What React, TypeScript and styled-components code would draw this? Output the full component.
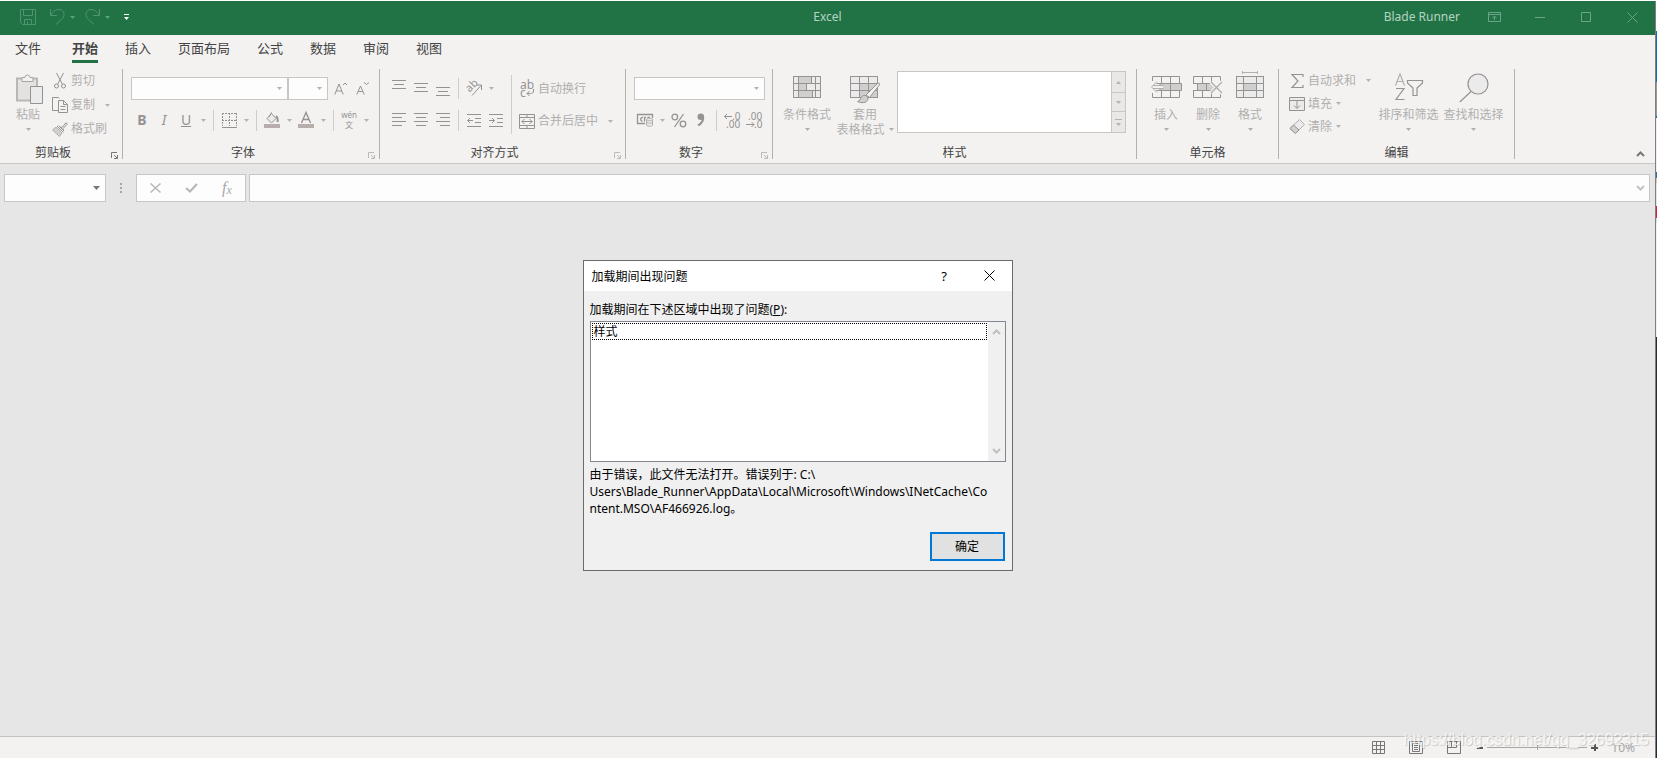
import React from "react";
import styled, { createGlobalStyle, css } from "styled-components";

const INK = "#959392";
const SOFT = "#b1afad";
const FILL = "#d0cfce";
const PALE = "#ebebeb";

const GlobalStyle = createGlobalStyle`
  *, *::before, *::after { box-sizing: border-box; }
  body {
    margin: 0;
    background: #ffffff;
    font-family: "Noto Sans", "Noto Sans CJK SC", sans-serif;
    font-size: 12px;
    line-height: 16px;
    color: #000000;
  }
  button, input, select {
    margin: 0;
    padding: 0;
    border: 0;
    border-radius: 0;
    background: none;
    font: inherit;
    color: inherit;
  }
  svg { display: block; flex: none; overflow: visible; }
`;

/* ---------- page frame ---------- */

const Desktop = styled.div`
  display: flex;
  min-height: 100vh;
  padding-top: 1px;
`;

const AppWindow = styled.div`
  position: relative;
  flex: 1;
  min-width: 0;
  display: flex;
  flex-direction: column;
  border-right: 1px solid #808080;
  background: #e6e6e6;
`;

const BehindEdge = styled.div`
  width: 1px;
  margin-right: 1px;
  background: linear-gradient(
    #ffffff 30px, #0f72a8 30px 81px, #9d9796 81px 115px, #0f72a8 115px 117px,
    #eeeeee 117px 171px, #2b6cb0 171px 177px, #d8c9a8 177px 182px, #e4e4e4 182px 205px,
    #d8203c 205px 217px, #c8e6ea 217px 222px, #f0f0f0 222px 336px, #222d38 336px
  );
`;

/* ---------- title bar ---------- */

const TitleBar = styled.header`
  display: grid;
  grid-template-columns: 1fr auto 1fr;
  align-items: center;
  height: 34px;
  padding-bottom: 2px;
  background: #217346;
  color: #b5d3c1;
`;

const QuickAccess = styled.div`
  display: flex;
  align-items: center;
  padding-left: 16px;
`;

const QuickButton = styled.button<{ $w: number; $gap?: number }>`
  display: flex;
  align-items: center;
  justify-content: center;
  width: ${(p) => p.$w}px;
  height: 24px;
  margin-left: ${(p) => p.$gap ?? 0}px;
`;

const AppTitle = styled.h1`
  margin: 0;
  font-size: 12px;
  font-weight: 400;
`;

const WindowControls = styled.div`
  display: flex;
  align-items: center;
  justify-content: flex-end;
`;

const Account = styled.span`
  margin-right: 11px;
`;

const ControlButton = styled.button`
  display: flex;
  align-items: center;
  justify-content: center;
  width: 46px;
  height: 32px;
`;

/* ---------- ribbon ---------- */

const Tabs = styled.nav`
  display: flex;
  gap: 27px;
  height: 34px;
  padding-left: 15px;
  background: #f3f2f1;
  color: #444444;
`;

const Tab = styled.button<{ $active?: boolean; $file?: boolean }>`
  height: 28px;
  padding-top: 1px;
  border-bottom: 3px solid ${(p) => (p.$active ? "#217346" : "transparent")};
  font-size: 13px;
  line-height: 24px;
  font-weight: ${(p) => (p.$active ? 700 : 400)};
  margin-right: ${(p) => (p.$file ? 4 : 0)}px;
`;

const Ribbon = styled.div`
  display: flex;
  padding-bottom: 4px;
  border-bottom: 1px solid #c8c6c4;
  background: #f3f2f1;
`;

const Group = styled.section<{ $w: number }>`
  flex: none;
  display: flex;
  flex-direction: column;
  width: ${(p) => p.$w}px;
  height: 90px;
  border-right: 1px solid #b3b0ad;
`;

const GroupBody = styled.div<{ $pad: number }>`
  flex: 1;
  display: flex;
  padding-left: ${(p) => p.$pad}px;
`;

const GroupFoot = styled.div`
  display: flex;
  height: 14px;
  color: #444444;
`;

const GroupName = styled.h2`
  flex: 1;
  margin: 0;
  font-size: 12px;
  line-height: 16px;
  font-weight: 400;
  text-align: center;
`;

const Launcher = styled.button`
  display: flex;
  align-items: flex-end;
  justify-content: center;
  width: 16px;
`;

const RibbonEnd = styled.div`
  flex: 1;
  display: flex;
  align-items: flex-end;
  justify-content: flex-end;
  padding-right: 9px;
`;

const CollapseButton = styled.button`
  display: flex;
  align-items: center;
  justify-content: center;
  width: 12px;
  height: 10px;
  color: #777777;
`;

const Stack = styled.div<{ $top?: number; $gap?: number; $w?: number }>`
  flex: none;
  display: flex;
  flex-direction: column;
  padding-top: ${(p) => p.$top ?? 0}px;
  gap: ${(p) => p.$gap ?? 0}px;
  ${(p) => p.$w && css`width: ${p.$w}px;`}
`;

const ToolRow = styled.div<{ $h?: number; $gap?: number }>`
  display: flex;
  align-items: center;
  height: ${(p) => p.$h ?? 24}px;
  gap: ${(p) => p.$gap ?? 0}px;
`;

const Divider = styled.span<{ $tall?: boolean }>`
  flex: none;
  width: 1px;
  height: ${(p) => (p.$tall ? 59 : 21)}px;
  margin: ${(p) => (p.$tall ? "6px 4px 0" : "0 4px")};
  background: #cfcdcb;
`;

const ToolButton = styled.button`
  display: flex;
  align-items: center;
  justify-content: center;
  width: 22px;
  height: 22px;
  color: ${INK};
  font-size: 14px;
`;

const CaretButton = styled.button<{ $color?: string; $w?: number }>`
  display: flex;
  align-items: center;
  justify-content: center;
  width: ${(p) => p.$w ?? 12}px;
  height: 22px;
  color: ${(p) => p.$color ?? "#b5b3b1"};
`;

const LabelButton = styled.button<{ $h: number; $pad?: number }>`
  display: flex;
  align-items: center;
  gap: 3px;
  height: ${(p) => p.$h}px;
  padding-left: ${(p) => p.$pad ?? 0}px;
  color: ${SOFT};
  white-space: nowrap;
`;

const IconSlot = styled.span`
  display: flex;
  justify-content: center;
  width: 16px;
`;

const BigButton = styled.button<{ $w: number }>`
  flex: none;
  display: flex;
  flex-direction: column;
  align-items: center;
  width: ${(p) => p.$w}px;
  height: 68px;
  color: ${SOFT};
  line-height: 15px;
  white-space: nowrap;
`;

const BigIcon = styled.span`
  display: flex;
  align-items: center;
  justify-content: center;
  height: 36px;
  margin-bottom: 2px;
`;

const BigLine = styled.span`
  display: flex;
  align-items: center;
  justify-content: center;
  gap: 4px;
  height: 15px;
`;

const Combo = styled.span<{ $w: number; $last?: boolean }>`
  display: flex;
  align-items: center;
  width: ${(p) => p.$w}px;
  height: 23px;
  padding-right: 5px;
  border: 1px solid #c8c6c4;
  background: #fdfdfd;
  color: #b5b3b1;
  margin-right: ${(p) => (p.$last ? 2 : 0)}px;
`;

const ComboSelect = styled.select`
  appearance: none;
  flex: 1;
  min-width: 0;
  height: 100%;
  opacity: 1;
`;

const Gallery = styled.div`
  display: flex;
  width: 229px;
  height: 62px;
  margin: 2px 0 0 3px;
  border: 1px solid #c8c6c4;
  background: #ffffff;
`;

const GalleryItems = styled.div`
  flex: 1;
`;

const GalleryScroll = styled.div`
  display: grid;
  grid-template-rows: 20px 18px 1fr;
  gap: 1px;
  width: 14px;
  border-left: 1px solid #c8c6c4;
  background: #c8c6c4;
`;

const GalleryButton = styled.button`
  display: flex;
  align-items: center;
  justify-content: center;
  background: #e9e8e7;
  color: #b5b3b1;
`;

/* ---------- formula bar ---------- */

const FormulaBar = styled.div`
  display: flex;
  align-items: center;
  padding: 10px 5px 0 4px;
`;

const FieldBox = styled.div<{ $w?: number }>`
  ${(p) => (p.$w ? css`width: ${p.$w}px;` : css`flex: 1; min-width: 0;`)}
  display: flex;
  align-items: center;
  height: 28px;
  padding-right: 3px;
  border: 1px solid #c6c6c6;
  background: #fdfdfd;
`;

const FieldInput = styled.input`
  flex: 1;
  min-width: 0;
  height: 100%;
  padding-left: 4px;
  outline: 0;
`;

const Grip = styled.span`
  display: flex;
  justify-content: center;
  width: 30px;
`;

const FormulaTools = styled.div`
  display: flex;
  align-items: center;
  justify-content: space-around;
  width: 110px;
  height: 28px;
  margin-right: 3px;
  border: 1px solid #c6c6c6;
  background: #fdfdfd;
`;

const FormulaTool = styled.button`
  display: flex;
  align-items: center;
  justify-content: center;
  width: 34px;
  height: 26px;
  color: #a8a8a8;
  font: italic 16px/20px "Liberation Serif", serif;
`;

const FxSub = styled.span`
  font-size: 12px;
  padding-top: 3px;
`;

const Workspace = styled.main`
  flex: 1;
`;

/* ---------- status bar ---------- */

const StatusBar = styled.footer`
  display: flex;
  align-items: center;
  justify-content: flex-end;
  height: 22px;
  padding-right: 20px;
  border-top: 1px solid #c6c4c2;
  background: #f3f2f1;
  color: #666666;
`;

const ViewButton = styled.button`
  display: flex;
  align-items: center;
  justify-content: center;
  width: 38px;
  height: 20px;
`;

const ZoomStep = styled.button`
  display: flex;
  align-items: center;
  justify-content: center;
  width: 14px;
  height: 20px;
`;

const ZoomSlider = styled.input`
  appearance: none;
  width: 100px;
  height: 20px;
  background: linear-gradient(#a6a6a6, #a6a6a6) center / 100% 1px no-repeat;
  &::-webkit-slider-thumb {
    appearance: none;
    width: 1px;
    height: 5px;
    background: #a6a6a6;
  }
`;

const ZoomValue = styled.output`
  width: 34px;
  color: #a6a6a6;
  text-align: right;
`;

const Watermark = styled.span`
  position: absolute;
  right: 6px;
  bottom: 8px;
  font: 16px/20px "Liberation Sans", sans-serif;
  color: rgba(255, 255, 255, 0.75);
  text-shadow: 1px 1px 1px rgba(120, 120, 120, 0.35);
  pointer-events: none;
`;

/* ---------- dialog ---------- */

const Dialog = styled.div`
  position: absolute;
  left: calc(50% - 245px);
  top: 259px;
  width: 430px;
  border: 1px solid #6b6b6b;
  background: #f0f0f0;
`;

const DialogHead = styled.div`
  display: flex;
  align-items: center;
  height: 30px;
  padding-left: 8px;
  background: #ffffff;
`;

const DialogTitle = styled.h2`
  flex: 1;
  margin: 0;
  padding-top: 1px;
  font-size: 12px;
  font-weight: 400;
`;

const DialogHeadButton = styled.button`
  display: flex;
  align-items: center;
  justify-content: center;
  width: 45px;
  height: 30px;
  padding-bottom: 1px;
  font-size: 13px;
`;

const DialogBody = styled.div`
  display: flex;
  flex-direction: column;
  padding: 10px 6px 9px;
`;

const ListLabel = styled.div`
  line-height: 17px;
  margin-bottom: 3px;
`;

const ListFrame = styled.div`
  display: flex;
  height: 141px;
  border: 1px solid #828790;
  background: #ffffff;
`;

const ProblemList = styled.ul`
  flex: 1;
  margin: 0;
  padding: 1px;
  list-style: none;
`;

const ProblemItem = styled.li`
  height: 17px;
  padding-left: 1px;
  border: 1px dotted #000000;
  line-height: 16px;
`;

const ListScroll = styled.div`
  display: flex;
  flex-direction: column;
  justify-content: space-between;
  align-items: center;
  width: 17px;
  padding: 7px 0;
  background: #f0f0f0;
  color: #bfbfbf;
`;

const Message = styled.p`
  margin: 4px 0 15px;
  line-height: 17px;
  white-space: nowrap;
`;

const ConfirmButton = styled.button`
  align-self: flex-end;
  width: 75px;
  height: 29px;
  margin-right: 1px;
  border: 2px solid #0078d7;
  background: #e1e1e1;
`;

/* ---------- icons ---------- */

type IconProps = { w: number; h: number; children: React.ReactNode; crisp?: boolean };

const Icon = ({ w, h, children, crisp }: IconProps) => (
  <svg
    width={w}
    height={h}
    viewBox={`0 0 ${w} ${h}`}
    fill="none"
    stroke={INK}
    shapeRendering={crisp ? "crispEdges" : undefined}
    aria-hidden="true"
  >
    {children}
  </svg>
);

const Caret = () => (
  <svg width="5" height="3" viewBox="0 0 5 3" aria-hidden="true">
    <path d="M0 0h5L2.500 3z" fill="currentColor" />
  </svg>
);

const Chevron = ({ up }: { up?: boolean }) => (
  <svg width="9" height="6" viewBox="0 0 9 6" fill="none" stroke="currentColor" strokeWidth="2" aria-hidden="true">
    <path d={up ? "M1 5l3.500-3.500L8 5" : "M1 1l3.500 3.500L8 1"} />
  </svg>
);

const LauncherIcon = ({ dark }: { dark?: boolean }) => (
  <svg width="7" height="7" viewBox="0 0 7 7" fill="none" stroke={dark ? "#777777" : "#bdbbb9"} aria-hidden="true">
    <path d="M.500 6V.500H6M3 3l3 3M6.500 3v3.500H3" />
  </svg>
);

const SaveIcon = () => (
  <svg width="16" height="16" viewBox="0 0 16 16" fill="none" stroke="#4f9470" aria-hidden="true">
    <path d="M.500.500h15v15H2.500l-2-2zM3.500.500v6h9v-6M4.500 15.500v-5h7v5M7.500 15.500v-3" />
  </svg>
);

const UndoIcon = ({ flip }: { flip?: boolean }) => (
  <svg width="15" height="16" viewBox="0 0 15 16" fill="none" stroke="#4f9470" aria-hidden="true">
    <g transform={flip ? "matrix(-1 0 0 1 15 0)" : undefined}>
      <path d="M.500 0v6.500H7M.500 6.500C3 2 6 .500 9 .500c3 0 5 2 5 5 0 2-1 3.500-2.500 5L6 15.500" />
    </g>
  </svg>
);

const PasteIcon = () => (
  <Icon w={32} h={35}>
    <g transform="translate(4 4)">
      <path d="M1 4.500h20v22H1z" fill="#e3e2e1" stroke="#b9b7b6" strokeWidth="2" />
      <path d="M6 7.500v-4h3a2.500 2.500 0 0 1 5 0h3v4z" fill="#f3f2f1" stroke="#a8a6a5" />
      <path d="M14.500 12.500h12v17h-12z" fill={PALE} stroke={INK} />
    </g>
  </Icon>
);

const CutIcon = () => (
  <Icon w={12} h={16}>
    <path d="M2.500 0L8.500 11.500M9.500 0L3.500 11.500" />
    <circle cx="2.500" cy="13" r="2" />
    <circle cx="9.500" cy="13" r="2" />
  </Icon>
);

const CopyIcon = () => (
  <Icon w={16} h={16}>
    <path d="M6 13.500H.500V.500h6l1 1M6.500 3.500h5l4 4v8h-9zM11.500 3.500v4h4M8.500 9.500h5M8.500 12.500h5" />
  </Icon>
);

const BrushIcon = () => (
  <Icon w={16} h={15}>
    <path d="M4 5l6 6-2.500 3.500L.500 8z" fill={FILL} stroke={SOFT} />
    <path d="M5 4l6.500 6.500M6.500 3.500L12 9M8 5l2 .500L14 .700l1.300 1.300L11 6.500l.500 2" />
  </Icon>
);

const BordersIcon = () => (
  <Icon w={15} h={15} crisp>
    <path d="M0 .500h15M.500 0v13M14.500 0v13M7.500 0v13M0 7.500h15" strokeDasharray="2 1" />
    <path d="M0 14.500h15" />
  </Icon>
);

const FillIcon = () => (
  <Icon w={16} h={16}>
    <path d="M3 6.500L7.500 1.500 12 6.500 7.500 11zM5 5l2.500-4.500" fill={PALE} />
    <path d="M12 4c1.500 1 2 3 1.500 6" strokeWidth="2" />
    <path d="M0 14h16" stroke="#b5aeab" strokeWidth="4" />
  </Icon>
);

const FontColorIcon = () => (
  <Icon w={16} h={16}>
    <path d="M3.500 11L8 .500 12.500 11M5 7.500h6" strokeWidth="1.300" />
    <path d="M0 14h16" stroke="#b5aeab" strokeWidth="4" />
  </Icon>
);

const AlignIcon = ({ lines }: { lines: Array<[number, number, number]> }) => (
  <Icon w={14} h={18} crisp>
    {lines.map(([x, y, w]) => (
      <path key={y} d={`M${x} ${y + 0.5}h${w}`} />
    ))}
  </Icon>
);

const IndentIcon = ({ right }: { right?: boolean }) => (
  <Icon w={14} h={14}>
    <path d="M0 1.500h14M8 5.500h6M8 9.500h6M0 13.500h14" />
    <path d={right ? "M0 7.500h5.500M3 5l2.500 2.500L3 10" : "M.500 7.500H6M3 5L.500 7.500 3 10"} />
  </Icon>
);

const SvgText = styled.text`
  fill: ${INK};
  stroke: none;
  font-family: "Noto Sans", "Noto Sans CJK SC", sans-serif;
`;

const OrientIcon = () => (
  <Icon w={17} h={16}>
    <SvgText x="0" y="10" fontSize="11" transform="rotate(-45 5 7)">ab</SvgText>
    <path d="M6 15.500L15 5.500M10.500 5h5v5" />
  </Icon>
);

const WrapIcon = () => (
  <Icon w={16} h={18}>
    <SvgText x="1" y="9" fontSize="12">ab</SvgText>
    <SvgText x="1" y="17" fontSize="12">c</SvgText>
    <path d="M14.500 9v2c0 2-1.500 2.500-3 2.500H8M10.500 11L8 13.500l2.500 2.500" />
  </Icon>
);

const MergeIcon = () => (
  <Icon w={16} h={15}>
    <path d="M.500.500h15v14H.500zM.500 3.500h15M.500 11.500h15M8 .500v3M8 11.500v3" />
    <path d="M2.500 7.500h11M5.500 5L3 7.500 5.500 10M10.500 5L13 7.500 10.500 10" />
  </Icon>
);

const CurrencyIcon = () => (
  <Icon w={17} h={14}>
    <path d="M8 10.500H.500V1.500h15V5M6 4.500C3 4 3 8.500 5.500 8M7.500 8.500v-4h1.500M11 7V4.500h2" strokeWidth="1.300" />
    <path d="M9.500 6.500c0-1.600 6-1.600 6 0v5.500c0 1.700-6 1.700-6 0z" fill={PALE} stroke={SOFT} />
    <path d="M9.500 6.500c0 1.500 6 1.500 6 0M9.500 9c0 1.500 6 1.500 6 0" stroke={SOFT} />
  </Icon>
);

const PercentIcon = () => (
  <Icon w={16} h={15}>
    <circle cx="3.800" cy="4" r="2.800" strokeWidth="1.300" />
    <circle cx="12" cy="11" r="2.800" strokeWidth="1.300" />
    <path d="M12.500 1L3.500 14" strokeWidth="1.300" />
  </Icon>
);

const CommaIcon = () => (
  <Icon w={8} h={14}>
    <circle cx="3.800" cy="3.800" r="3.300" fill={INK} stroke="none" />
    <path d="M6.200 4C6.500 8 4.500 10.500 1 12.500" strokeWidth="2" />
  </Icon>
);

const DecimalIcon = ({ less }: { less?: boolean }) => (
  <Icon w={16} h={17}>
    {less ? (
      <>
        <SvgText x="2" y="8" fontSize="10">.00</SvgText>
        <SvgText x="8" y="16" fontSize="10">.0</SvgText>
        <path d="M0 12.500h8M5.500 10L8 12.500 5.500 15" />
      </>
    ) : (
      <>
        <SvgText x="8" y="8" fontSize="10">.0</SvgText>
        <SvgText x="2" y="16" fontSize="10">.00</SvgText>
        <path d="M.500 4.500H8M3 2L.500 4.500 3 7" />
      </>
    )}
  </Icon>
);

const CondIcon = () => (
  <Icon w={28} h={22} crisp>
    <path d="M.500.500h27v21H.500z" fill={PALE} />
    <path d="M5 1h13v6H5zM5 7h9v7H5zM5 14h15v7H5z" fill={FILL} stroke="none" />
    <path d="M.500.500h27v21H.500zM0 7.500h28M0 14.500h28M5.500 0v22M18.500 0v7M13.500 7v7M19.500 14v8M22.500 0v22" />
  </Icon>
);

const TableStyleIcon = () => (
  <Icon w={30} h={22}>
    <path d="M.500.500h27v21H.500z" fill={PALE} />
    <path d="M10 8h17v13H10z" fill={FILL} stroke="none" />
    <path d="M.500.500h27v21H.500zM0 7.500h28M0 14.500h28M9.500 0v22M18.500 0v22" />
    <path d="M16 19L27.500 7.500c1.500-1 2.500 0 1.800 1.500L19.500 21.500z" fill="#f3f2f1" />
    <path d="M7.500 25.500c3 0 2.500-5 6-6 3-.600 5 1.500 4.500 4-1 3.500-7 4-10.500 2z" fill={FILL} />
  </Icon>
);

const InsertIcon = () => (
  <Icon w={32} h={22}>
    <path d="M2.500 5V.500h27v21h-27V17M2.500 14.500h27M2.500 7.500h27M11.500.500v7M20.500.500v7M11.500 14.500v7M20.500 14.500v7" />
    <path d="M10 7.500h21.500v7H10z" fill={FILL} />
    <path d="M20.500 7.500v7" />
    <path d="M7 4L0 11l7 7M13 11H2" stroke="#f3f2f1" strokeWidth="4" />
    <path d="M13.500 9.500H3M13.500 12.500H3M7 5.500L1.500 11 7 16.500" stroke={SOFT} />
  </Icon>
);

const DeleteIcon = () => (
  <Icon w={30} h={22}>
    <path d="M.500 7.500V.500h27v5M.500 14.500v7h27V18M0 7.500h20M0 14.500h20M9.500.500v7M18.500.500v7M9.500 14.500v7M18.500 14.500v7" />
    <path d="M4.500 7.500h14l3 3.500-3 3.500h-14z" fill={FILL} />
    <path d="M13.500 7.500v7" />
    <path d="M18 6l11 11M29 6L18 17" stroke="#f3f2f1" strokeWidth="4" />
    <path d="M18 6l11 11M29 6L18 17" stroke={SOFT} strokeWidth="1.400" />
  </Icon>
);

const FormatIcon = () => (
  <Icon w={28} h={22} crisp>
    <g transform="translate(0 -5)">
      <path d="M6 1.500h16M6.500 0v3M21.500 0v3" stroke={SOFT} />
      <path d="M.500 5.500h27v21H.500z" fill={PALE} />
      <path d="M8 12h13v7H8z" fill={FILL} stroke="none" />
      <path d="M.500 5.500h27v21H.500zM0 12.500h28M0 19.500h28M7.500 5v22M20.500 5v22" />
    </g>
  </Icon>
);

const SumIcon = () => (
  <Icon w={13} h={14}>
    <path d="M12 3V.500H1L7 7l-6 6.500h11V11" strokeWidth="1.200" />
  </Icon>
);

const FillDownIcon = () => (
  <Icon w={16} h={14}>
    <path d="M.500.500h15v13H.500zM.500 3.500h15" fill={PALE} />
    <path d="M8 4v7M5 8.500l3 3 3-3" />
  </Icon>
);

const EraserIcon = () => (
  <Icon w={16} h={15}>
    <path d="M10.500.500l5 5-9 9-5.500-5z" fill={PALE} stroke={SOFT} />
    <path d="M4.500 6L1 9.500l5.500 5L10 11z" fill={FILL} />
  </Icon>
);

const SortIcon = () => (
  <Icon w={28} h={28}>
    <path d="M.500 12.500L5 1l4.500 11.500M2.200 8.500h5.600" stroke={SOFT} strokeWidth="1.200" />
    <path d="M1 15.500h8L1 26.500h8.500" strokeWidth="1.200" />
    <path d="M12.500 7.500h15v2.500l-5.500 5v7.500h-4V15l-5.500-5z" strokeWidth="1.200" />
  </Icon>
);

const FindIcon = () => (
  <Icon w={30} h={30}>
    <circle cx="19" cy="12" r="10" fill={PALE} strokeWidth="1.200" />
    <path d="M12 19.500L.800 30" strokeWidth="1.200" />
  </Icon>
);

/* ---------- composed parts ---------- */

type GroupProps = { name: string; w: number; pad: number; launcher?: "dark" | "light"; children: React.ReactNode };

const RibbonGroup = ({ name, w, pad, launcher, children }: GroupProps) => (
  <Group $w={w} aria-label={name}>
    <GroupBody $pad={pad}>{children}</GroupBody>
    <GroupFoot>
      <GroupName>{name}</GroupName>
      {launcher && (
        <Launcher aria-label={`${name}设置`}>
          <LauncherIcon dark={launcher === "dark"} />
        </Launcher>
      )}
    </GroupFoot>
  </Group>
);

const Tool = ({ label, children }: { label: string; children: React.ReactNode }) => (
  <ToolButton disabled aria-label={label}>{children}</ToolButton>
);

const More = ({ label }: { label: string }) => (
  <CaretButton disabled aria-label={`${label}选项`}><Caret /></CaretButton>
);

const Small = ({ icon, text, h = 24, pad }: { icon: React.ReactNode; text: string; h?: number; pad?: number }) => (
  <LabelButton disabled $h={h} $pad={pad}><IconSlot>{icon}</IconSlot>{text}</LabelButton>
);

const Big = ({ icon, text, text2, w }: { icon: React.ReactNode; text: string; text2?: string; w: number }) => (
  <BigButton disabled $w={w}>
    <BigIcon>{icon}</BigIcon>
    <BigLine>{text}</BigLine>
    <BigLine>{text2}<Caret /></BigLine>
  </BigButton>
);

const Picker = ({ label, w, last }: { label: string; w: number; last?: boolean }) => (
  <Combo $w={w} $last={last}>
    <ComboSelect disabled aria-label={label}><option /></ComboSelect>
    <Caret />
  </Combo>
);

const TABS = ["文件", "开始", "插入", "页面布局", "公式", "数据", "审阅", "视图"];

const LoadProblemDialog = () => (
  <Dialog role="dialog" aria-labelledby="problem-title">
    <DialogHead>
      <DialogTitle id="problem-title">加载期间出现问题</DialogTitle>
      <DialogHeadButton aria-label="帮助">?</DialogHeadButton>
      <DialogHeadButton aria-label="关闭">
        <svg width="11" height="11" viewBox="0 0 11 11" stroke="#000" aria-hidden="true">
          <path d="M.500.500l10 10M10.500.500l-10 10" />
        </svg>
      </DialogHeadButton>
    </DialogHead>
    <DialogBody>
      <ListLabel id="problem-list">加载期间在下述区域中出现了问题(<u>P</u>):</ListLabel>
      <ListFrame>
        <ProblemList role="listbox" aria-labelledby="problem-list" tabIndex={0}>
          <ProblemItem role="option" aria-selected="false">样式</ProblemItem>
        </ProblemList>
        <ListScroll><Chevron up /><Chevron /></ListScroll>
      </ListFrame>
      <Message>
        由于错误，此文件无法打开。错误列于: C:\<br />
        Users\Blade_Runner\AppData\Local\Microsoft\Windows\INetCache\Co<br />
        ntent.MSO\AF466926.log。
      </Message>
      <ConfirmButton>确定</ConfirmButton>
    </DialogBody>
  </Dialog>
);

export default function App() {
  return (
    <>
      <GlobalStyle />
      <Desktop>
        <AppWindow>
          <TitleBar>
            <QuickAccess>
              <QuickButton $w={24} aria-label="保存"><SaveIcon /></QuickButton>
              <QuickButton $w={20} $gap={7} aria-label="撤消"><UndoIcon /></QuickButton>
              <CaretButton $w={10} $color="#5f9f7e" aria-label="撤消选项"><Caret /></CaretButton>
              <QuickButton $w={20} $gap={5} aria-label="恢复"><UndoIcon flip /></QuickButton>
              <CaretButton $w={10} $color="#5f9f7e" aria-label="恢复选项"><Caret /></CaretButton>
              <QuickButton $w={14} $gap={7} aria-label="自定义快速访问工具栏">
                <svg width="5" height="6" viewBox="0 0 5 6" fill="#fff" aria-hidden="true">
                  <path d="M0 0h5v1H0zM0 3h5L2.500 6z" />
                </svg>
              </QuickButton>
            </QuickAccess>
            <AppTitle>Excel</AppTitle>
            <WindowControls>
              <Account>Blade Runner</Account>
              <ControlButton aria-label="功能区显示选项">
                <svg width="13" height="10" viewBox="0 0 13 10" fill="none" stroke="#6aa587" aria-hidden="true">
                  <path d="M.500.500h12v9H.500zM.500 2.500h12M6.500 8V4.500M4.500 6l2-2 2 2" />
                </svg>
              </ControlButton>
              <ControlButton aria-label="最小化">
                <svg width="10" height="1" aria-hidden="true"><path d="M0 0h10v1H0z" fill="#6aa587" /></svg>
              </ControlButton>
              <ControlButton aria-label="最大化">
                <svg width="10" height="10" fill="none" stroke="#6aa587" aria-hidden="true"><path d="M.500.500h9v9h-9z" /></svg>
              </ControlButton>
              <ControlButton aria-label="关闭">
                <svg width="11" height="11" stroke="#6aa587" aria-hidden="true"><path d="M.500.500l10 10M10.500.500l-10 10" /></svg>
              </ControlButton>
            </WindowControls>
          </TitleBar>

          <Tabs>
            {TABS.map((tab, i) => (
              <Tab key={tab} $file={i === 0} $active={i === 1}>{tab}</Tab>
            ))}
          </Tabs>

          <Ribbon>
            <RibbonGroup name="剪贴板" w={123} pad={11} launcher="dark">
              <Big icon={<PasteIcon />} text="粘贴" w={34} />
              <Stack>
                <Small icon={<CutIcon />} text="剪切" pad={7} />
                <ToolRow $gap={6}>
                  <Small icon={<CopyIcon />} text="复制" pad={7} />
                  <More label="复制" />
                </ToolRow>
                <Small icon={<BrushIcon />} text="格式刷" pad={7} />
              </Stack>
            </RibbonGroup>

            <RibbonGroup name="字体" w={257} pad={8} launcher="light">
              <Stack $top={7} $gap={8}>
                <ToolRow>
                  <Picker label="字体" w={157} />
                  <Picker label="字号" w={40} last />
                  <Tool label="增大字号">
                    <Icon w={14} h={13}><path d="M.800 12.500L5 2l4.200 10.500M2.300 9h5.400M9 3l2-2 2 2" /></Icon>
                  </Tool>
                  <Tool label="减小字号">
                    <Icon w={14} h={13}><path d="M.800 12.500L4.500 4l3.700 8.500M2.300 9.500h4.400M8 .500l2.500 2 2.500-2" /></Icon>
                  </Tool>
                </ToolRow>
                <ToolRow>
                  <Tool label="加粗"><b>B</b></Tool>
                  <Tool label="倾斜"><i>I</i></Tool>
                  <Tool label="下划线"><u>U</u></Tool>
                  <More label="下划线" />
                  <Divider />
                  <Tool label="边框"><BordersIcon /></Tool>
                  <More label="边框" />
                  <Divider />
                  <Tool label="填充颜色"><FillIcon /></Tool>
                  <More label="填充颜色" />
                  <Tool label="字体颜色"><FontColorIcon /></Tool>
                  <More label="字体颜色" />
                  <Divider />
                  <Tool label="拼音指南">
                    <Icon w={16} h={17}>
                      <SvgText x="8" y="6" fontSize="8" textAnchor="middle">wén</SvgText>
                      <SvgText x="8" y="16" fontSize="8" textAnchor="middle">文</SvgText>
                    </Icon>
                  </Tool>
                  <More label="拼音指南" />
                </ToolRow>
              </Stack>
            </RibbonGroup>

            <RibbonGroup name="对齐方式" w={246} pad={8} launcher="light">
              <Stack $top={7} $gap={8}>
                <ToolRow>
                  <Tool label="顶端对齐"><AlignIcon lines={[[0, 1, 14], [2, 5, 10], [0, 9, 14]]} /></Tool>
                  <Tool label="垂直居中"><AlignIcon lines={[[0, 4, 14], [2, 8, 10], [0, 12, 14]]} /></Tool>
                  <Tool label="底端对齐"><AlignIcon lines={[[0, 8, 14], [2, 12, 10], [0, 16, 14]]} /></Tool>
                  <Divider />
                  <Tool label="方向"><OrientIcon /></Tool>
                  <More label="方向" />
                </ToolRow>
                <ToolRow>
                  <Tool label="左对齐"><AlignIcon lines={[[0, 2, 14], [0, 6, 10], [0, 10, 14], [0, 14, 10]]} /></Tool>
                  <Tool label="居中"><AlignIcon lines={[[0, 2, 14], [2, 6, 10], [0, 10, 14], [2, 14, 10]]} /></Tool>
                  <Tool label="右对齐"><AlignIcon lines={[[0, 2, 14], [4, 6, 10], [0, 10, 14], [4, 14, 10]]} /></Tool>
                  <Divider />
                  <Tool label="减少缩进量"><IndentIcon /></Tool>
                  <Tool label="增加缩进量"><IndentIcon right /></Tool>
                </ToolRow>
              </Stack>
              <Divider $tall />
              <Stack $top={8} $gap={8}>
                <Small icon={<WrapIcon />} text="自动换行" pad={3} />
                <ToolRow $gap={6}>
                  <Small icon={<MergeIcon />} text="合并后居中" pad={3} />
                  <More label="合并后居中" />
                </ToolRow>
              </Stack>
            </RibbonGroup>

            <RibbonGroup name="数字" w={147} pad={8} launcher="light">
              <Stack $top={7} $gap={8}>
                <ToolRow><Picker label="数字格式" w={131} /></ToolRow>
                <ToolRow>
                  <Tool label="会计数字格式"><CurrencyIcon /></Tool>
                  <More label="会计数字格式" />
                  <Tool label="百分比样式"><PercentIcon /></Tool>
                  <Tool label="千位分隔样式"><CommaIcon /></Tool>
                  <Divider />
                  <Tool label="增加小数位数"><DecimalIcon /></Tool>
                  <Tool label="减少小数位数"><DecimalIcon less /></Tool>
                </ToolRow>
              </Stack>
            </RibbonGroup>

            <RibbonGroup name="样式" w={364} pad={5}>
              <Big icon={<CondIcon />} text="条件格式" w={58} />
              <Big icon={<TableStyleIcon />} text="套用" text2="表格格式" w={58} />
              <Gallery>
                <GalleryItems />
                <GalleryScroll>
                  <GalleryButton disabled aria-label="上一行">
                    <svg width="5" height="3" aria-hidden="true"><path d="M0 3h5L2.500 0z" fill="currentColor" /></svg>
                  </GalleryButton>
                  <GalleryButton disabled aria-label="下一行"><Caret /></GalleryButton>
                  <GalleryButton disabled aria-label="其他">
                    <svg width="7" height="7" aria-hidden="true"><path d="M0 0h7v1H0zM1 4h5L3.500 7z" fill="currentColor" /></svg>
                  </GalleryButton>
                </GalleryScroll>
              </Gallery>
            </RibbonGroup>

            <RibbonGroup name="单元格" w={142} pad={8}>
              <Big icon={<InsertIcon />} text="插入" w={42} />
              <Big icon={<DeleteIcon />} text="删除" w={42} />
              <Big icon={<FormatIcon />} text="格式" w={42} />
            </RibbonGroup>

            <RibbonGroup name="编辑" w={236} pad={10}>
              <Stack $w={87}>
                <ToolRow $h={23} $gap={6}>
                  <Small icon={<SumIcon />} text="自动求和" h={23} />
                  <More label="自动求和" />
                </ToolRow>
                <ToolRow $h={23}><Small icon={<FillDownIcon />} text="填充" h={23} /><More label="填充" /></ToolRow>
                <ToolRow $h={23}><Small icon={<EraserIcon />} text="清除" h={23} /><More label="清除" /></ToolRow>
              </Stack>
              <Big icon={<SortIcon />} text="排序和筛选" w={65} />
              <Big icon={<FindIcon />} text="查找和选择" w={65} />
            </RibbonGroup>

            <RibbonEnd>
              <CollapseButton aria-label="折叠功能区"><Chevron up /></CollapseButton>
            </RibbonEnd>
          </Ribbon>

          <FormulaBar>
            <FieldBox $w={102}>
              <FieldInput aria-label="名称框" />
              <CaretButton $color="#777777" aria-label="名称列表">
                <svg width="7" height="4" aria-hidden="true"><path d="M0 0h7L3.500 4z" fill="currentColor" /></svg>
              </CaretButton>
            </FieldBox>
            <Grip>
              <svg width="2" height="10" fill="#a6a6a6" aria-hidden="true"><path d="M0 0h2v2H0zM0 4h2v2H0zM0 8h2v2H0z" /></svg>
            </Grip>
            <FormulaTools>
              <FormulaTool aria-label="取消">
                <svg width="11" height="10" stroke="#b8b8b8" strokeWidth="1.600" aria-hidden="true"><path d="M.500.500l10 9M10.500.500l-10 9" /></svg>
              </FormulaTool>
              <FormulaTool aria-label="输入">
                <svg width="13" height="10" fill="none" stroke="#b8b8b8" strokeWidth="2.200" aria-hidden="true"><path d="M1 5l4 3.500L12 1" /></svg>
              </FormulaTool>
              <FormulaTool aria-label="插入函数">f<FxSub>x</FxSub></FormulaTool>
            </FormulaTools>
            <FieldBox>
              <FieldInput aria-label="编辑栏" />
              <CaretButton $color="#c2c2c2" aria-label="展开编辑栏"><Chevron /></CaretButton>
            </FieldBox>
          </FormulaBar>

          <Workspace />

          <StatusBar>
            <ViewButton aria-label="普通">
              <svg width="13" height="13" fill="none" stroke="#777" aria-hidden="true">
                <path d="M.500.500h12v12H.500zM0 4.500h13M0 8.500h13M4.500 0v13M8.500 0v13" />
              </svg>
            </ViewButton>
            <ViewButton aria-label="页面布局">
              <svg width="14" height="13" fill="none" stroke="#777" aria-hidden="true">
                <path d="M.500.500h13v12H.500zM3.500 2.500h7v8h-7zM5 4.500h4M5 6.500h4M5 8.500h4" />
              </svg>
            </ViewButton>
            <ViewButton aria-label="分页预览">
              <svg width="14" height="13" fill="none" stroke="#777" aria-hidden="true">
                <path d="M.500.500h13v12H.500zM4.500.500v6h5v-6M.500 6.500h4" />
              </svg>
            </ViewButton>
            <ZoomStep aria-label="缩小">
              <svg width="6" height="2" aria-hidden="true"><path d="M0 0h6v2H0z" fill="#555" /></svg>
            </ZoomStep>
            <ZoomSlider type="range" aria-label="显示比例" defaultValue={50} />
            <ZoomStep aria-label="放大">
              <svg width="7" height="7" aria-hidden="true"><path d="M0 3h7v2H0zM3 0h2v7H3z" fill="#555" /></svg>
            </ZoomStep>
            <ZoomValue>10%</ZoomValue>
          </StatusBar>

          <LoadProblemDialog />
          <Watermark>https://blog.csdn.net/qq_32692315</Watermark>
        </AppWindow>
        <BehindEdge />
      </Desktop>
    </>
  );
}
